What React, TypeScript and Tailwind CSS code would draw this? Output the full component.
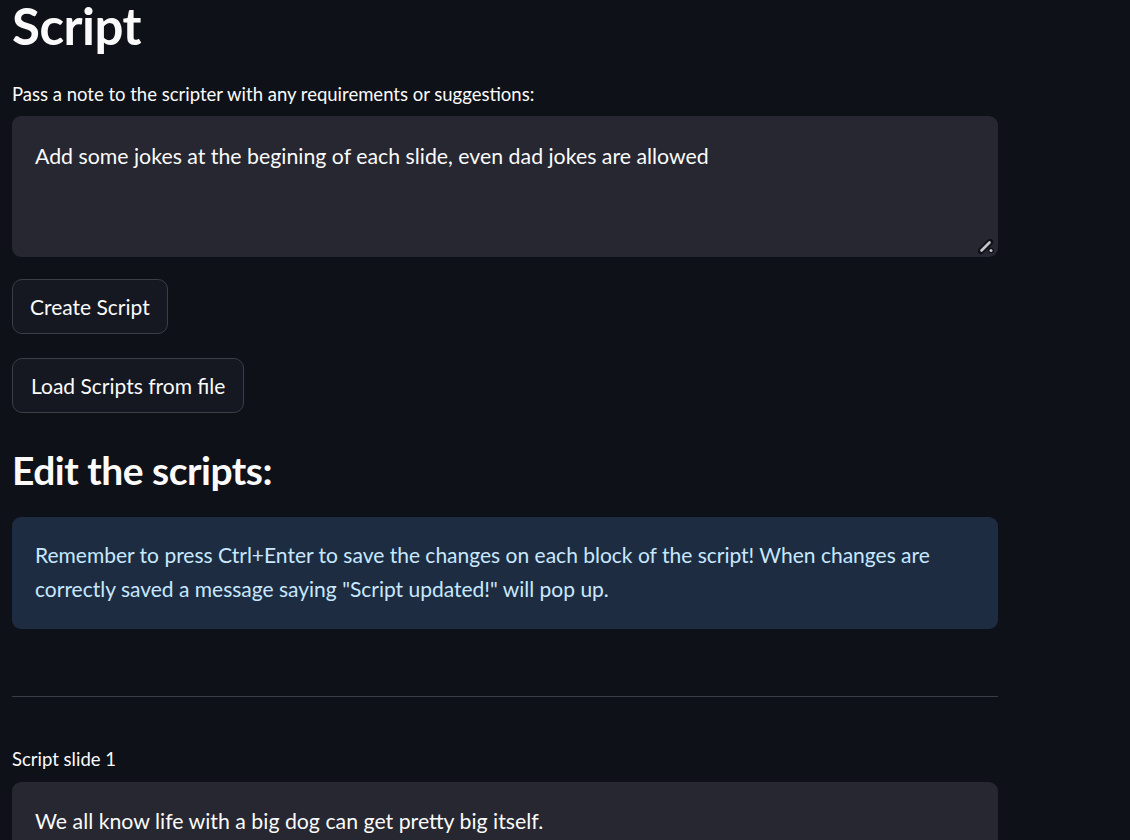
export default function App() {
  const font = { fontFamily: "Lato, 'Noto Sans', sans-serif" };
  return (
    <div className="h-[840px] bg-[#0e1117] text-[#fafafa] overflow-hidden" style={font}>
      <div className="w-[986px] ml-[12px] flex flex-col">
        <h1 className="h-[52px] text-[51px] font-bold leading-[52px] tracking-[-0.5px]">Script</h1>
        <label className="mt-[30px] h-[24px] text-[18.5px] leading-[24px]">
          Pass a note to the scripter with any requirements or suggestions:
        </label>
        <div className="relative mt-[10px] h-[141px] rounded-[9px] bg-[#262730] px-[23px] pt-[26px]">
          <p className="text-[21.3px] leading-[28px] text-[#fafafa]">
            Add some jokes at the begining of each slide, even dad jokes are allowed
          </p>
          <svg className="absolute right-[2px] bottom-[2px]" width="18" height="16" viewBox="0 0 18 16">
            <path d="M3 12 L12 3" stroke="#0e1117" strokeWidth="6.5" strokeLinecap="round" />
            <path d="M3.5 11.5 L11.5 3.5" stroke="#c4c5c9" strokeWidth="2.6" strokeLinecap="round" />
            <circle cx="13" cy="11.5" r="2.8" fill="#0e1117" />
            <circle cx="13" cy="11.5" r="1.5" fill="#c4c5c9" />
          </svg>
        </div>
        <div className="mt-[22px] flex flex-col items-start gap-[24px]">
          <button className="h-[55px] rounded-[10px] border border-[#3b3e45] bg-[#151820] px-[17px] text-[21px] text-[#fafafa]">
            Create Script
          </button>
          <button className="h-[55px] rounded-[10px] border border-[#3b3e45] bg-[#151820] px-[18px] text-[21px] text-[#fafafa]">
            Load Scripts from file
          </button>
        </div>
        <h2 className="mt-[33px] h-[48px] text-[39px] font-bold leading-[48px] tracking-[-0.5px]">Edit the scripts:</h2>
        <div className="mt-[23px] h-[112px] rounded-[9px] bg-[#1e2c42] px-[23px] pt-[21px] text-[21px] leading-[34px] text-[#c7e8ff]">
          Remember to press Ctrl+Enter to save the changes on each block of the script! When changes are
          correctly saved a message saying "Script updated!" will pop up.
        </div>
        <div className="mt-[67px] h-px bg-[#3a3d45]" />
        <div className="mt-[50px] h-[24px] text-[18.5px] leading-[24px]">Script slide 1</div>
        <div className="mt-[11px] h-[141px] rounded-[9px] bg-[#262730] px-[23px] pt-[25px]">
          <p className="text-[21.3px] leading-[28px] text-[#fafafa]">
            We all know life with a big dog can get pretty big itself.
          </p>
        </div>
      </div>
    </div>
  );
}
